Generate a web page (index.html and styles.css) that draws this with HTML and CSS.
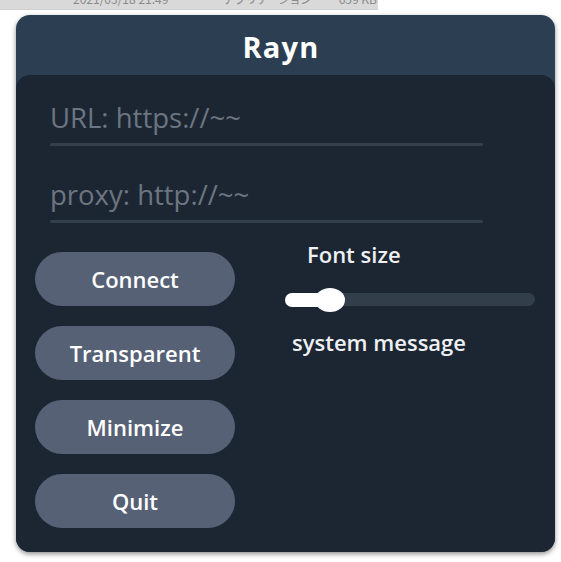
FILE: index.html
```html
<!DOCTYPE html>
<html>
<head>
<meta charset="utf-8">
<link rel="stylesheet" href="styles.css">
</head>
<body>
<div class="strip">
  <span class="s-date">2021/03/18 21:49</span>
  <span class="s-type">アプリケーション</span>
  <span class="s-size">659 KB</span>
</div>
<div class="window">
  <div class="header"><h1 class="title">Rayn</h1></div>
  <div class="panel">
    <div class="field">
      <div class="placeholder">URL: https://~~</div>
      <div class="underline"></div>
    </div>
    <div class="field field-2">
      <div class="placeholder">proxy: http://~~</div>
      <div class="underline"></div>
    </div>
    <div class="lower">
      <div class="buttons">
        <button class="btn">Connect</button>
        <button class="btn">Transparent</button>
        <button class="btn">Minimize</button>
        <button class="btn">Quit</button>
      </div>
      <div class="side">
        <div class="label-font">Font size</div>
        <div class="slider">
          <div class="fill" style="width:45px"></div>
          <div class="thumb"></div>
        </div>
        <div class="label-msg">system message</div>
      </div>
    </div>
  </div>
</div>
</body>
</html>
```
FILE: styles.css
```css
* { box-sizing: border-box; }
html, body { margin: 0; padding: 0; background: #ffffff; }
body { font-family: "Open Sans", "Noto Sans CJK JP", sans-serif; width: 561px; height: 562px; overflow: hidden; }

.strip {
  width: 378px;
  height: 10px;
  background: #d9d9d9;
  border-bottom: 1px solid #cfcfcf;
  overflow: hidden;
  display: flex;
  align-items: flex-end;
  font-family: "Noto Sans CJK JP", "Noto Sans", sans-serif;
  font-size: 12px;
  line-height: 14px;
  color: #8a8a8a;
}
.strip span { display: block; margin-bottom: 3px; white-space: nowrap; }
.s-date { margin-left: 73px; }
.s-type { margin-left: 55px; letter-spacing: -1px; }
.s-size { margin-left: auto; margin-right: 1px; }

.window {
  margin: 5px 0 0 16px;
  width: 539px;
  height: 537px;
  border-radius: 14px;
  background: #2c3e52;
  box-shadow: 0 2px 5px rgba(0,0,0,0.45);
  display: flex;
  flex-direction: column;
}
.header {
  height: 60px;
  display: flex;
  align-items: center;
  justify-content: center;
  padding-right: 9px;
}
.title {
  margin: 0;
  font-size: 29px;
  font-weight: 700;
  color: #ffffff;
  letter-spacing: 1.2px;
  line-height: 1;
  padding-top: 2px;
}
.panel {
  flex: 1;
  background: #1c2633;
  border-radius: 14px;
  padding: 26px 0 0 0;
}
.field { margin-left: 34px; width: 433px; }
.field-2 { margin-top: 32px; }
.placeholder {
  font-size: 27.5px;
  line-height: 34px;
  color: #6c7580;
}
.underline {
  margin-top: 8px;
  height: 3px;
  border-radius: 2px;
  background: #343f4c;
}
.lower {
  display: flex;
  margin-top: 17px;
}
.buttons {
  display: flex;
  flex-direction: column;
  gap: 20px;
  padding-top: 12px;
  margin-left: 19px;
}
.btn {
  width: 200px;
  height: 54px;
  border: none;
  border-radius: 27px;
  background: #566176;
  color: #ffffff;
  font-family: "Open Sans", sans-serif;
  font-size: 22px;
  font-weight: 600;
  padding: 0;
}
.side {
  margin-left: 50px;
  width: 250px;
  display: flex;
  flex-direction: column;
}
.label-font {
  font-size: 22px;
  font-weight: 600;
  line-height: 28px;
  color: #eef0f2;
  padding-left: 22px;
}
.slider {
  position: relative;
  margin-top: 20px;
  height: 24px;
}
.slider::before {
  content: "";
  position: absolute;
  left: 0; right: 0;
  top: 5px;
  height: 13px;
  border-radius: 7px;
  background: #333e4b;
}
.fill {
  position: absolute;
  left: 0;
  top: 5px;
  height: 14px;
  border-radius: 7px;
  background: #ffffff;
}
.thumb {
  position: absolute;
  left: 30px;
  top: 0;
  width: 30px;
  height: 24px;
  border-radius: 50%;
  background: #ffffff;
}
.label-msg {
  margin-top: 16px;
  font-size: 22px;
  font-weight: 600;
  line-height: 28px;
  color: #eef0f2;
  padding-left: 7px;
}
```
